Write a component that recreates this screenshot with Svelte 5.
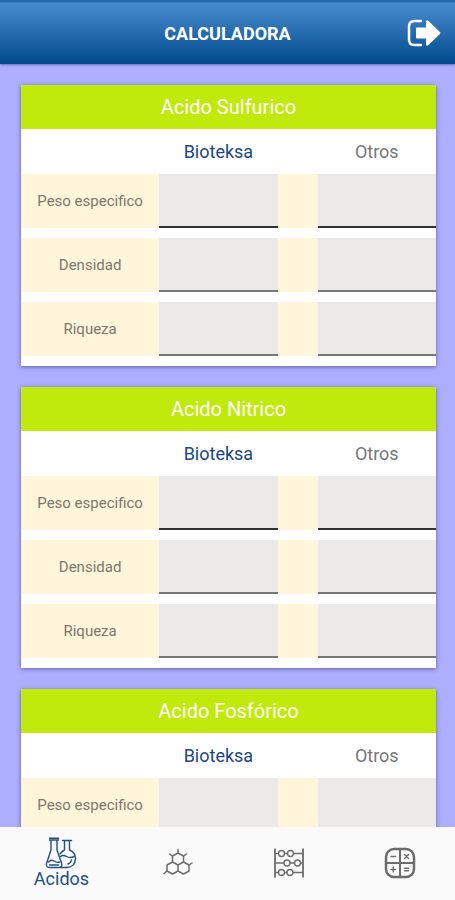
<script lang="ts">
	type Acid = {
		id: string;
		name: string;
	};

	const acids: Acid[] = [
		{ id: 'sulfurico', name: 'Acido Sulfurico' },
		{ id: 'nitrico', name: 'Acido Nitrico' },
		{ id: 'fosforico', name: 'Acido Fosfórico' }
	];

	const fields = [
		{ id: 'peso', label: 'Peso especifico' },
		{ id: 'densidad', label: 'Densidad' },
		{ id: 'riqueza', label: 'Riqueza' }
	];

	const brands = ['Bioteksa', 'Otros'];

	let activeTab = $state('acidos');
	let values: Record<string, string> = $state({});
</script>

<div class="app">
	<header class="top-bar">
		<h1>CALCULADORA</h1>
		<button type="button" class="exit-button" aria-label="Salir">
			<svg viewBox="0 0 36 30" width="36" height="30">
				<path
					d="M15 3H8.5Q3 3 3 8.5V21.5Q3 27 8.5 27H15"
					fill="none"
					stroke="#fff"
					stroke-width="2.5"
					stroke-linecap="round"
				/>
				<path
					d="M11 9.5H20V4Q20 1 22.500 3L34 14Q35 15 34 16L22.500 27Q20 29 20 26V20.500H11Q10 20.500 10 19.500V10.500Q10 9.500 11 9.500Z"
					fill="#fff"
				/>
			</svg>
		</button>
	</header>

	<main class="cards">
		{#each acids as acid (acid.id)}
			<section class="card">
				<h2>{acid.name}</h2>
				<table>
					<colgroup>
						<col class="col-label" />
						<col />
						<col class="col-gap" />
						<col />
					</colgroup>
					<thead>
						<tr>
							<td></td>
							<th scope="col" class="brand">{brands[0]}</th>
							<td></td>
							<th scope="col">{brands[1]}</th>
						</tr>
					</thead>
					<tbody>
						{#each fields as field (field.id)}
							<tr>
								<th scope="row">{field.label}</th>
								{#each brands as brand, i (brand)}
									{#if i > 0}
										<td class="gap"></td>
									{/if}
									<td>
										<input
											type="text"
											inputmode="decimal"
											aria-label="{acid.name}, {field.label}, {brand}"
											bind:value={values[`${acid.id}-${field.id}-${brand}`]}
										/>
									</td>
								{/each}
							</tr>
						{/each}
					</tbody>
				</table>
			</section>
		{/each}
	</main>

	<nav class="tabs">
		<button
			type="button"
			class="tab"
			class:active={activeTab === 'acidos'}
			onclick={() => (activeTab = 'acidos')}
		>
			<svg viewBox="0 0 32 32" width="32" height="32">
				<g fill="none" stroke="currentColor" stroke-width="1.4" stroke-linejoin="round" stroke-linecap="round">
					<path d="M4.500 1.200H13.500M4.500 3H13.500M6 3V13L1.500 26.500Q1 30.500 4 30.500H15.500M12 3V13L16.500 26Q17.500 30.500 14.500 30.500" />
					<path d="M3.500 25Q6.500 22 9 24T14.500 25M4.500 28H13.500" />
					<path d="M17.500 3.500H26.500M19.500 3.500V13M24.500 3.500V13Q30.500 15.500 30.500 21.500Q30 30 22 30.500H15.500M19.500 13Q16.500 14.500 15 17" />
					<path d="M15.500 19.500Q18 17.500 21.500 19.500T29 19.500M26.500 23Q26 26 23 27" />
				</g>
			</svg>
			<span>Acidos</span>
		</button>
		<button
			type="button"
			class="tab"
			class:active={activeTab === 'moleculas'}
			aria-label="Moléculas"
			onclick={() => (activeTab = 'moleculas')}
		>
			<svg viewBox="0 0 32 32" width="32" height="32">
				<g fill="none" stroke="currentColor" stroke-width="1.5" stroke-linejoin="round" stroke-linecap="round">
					<path d="M16 6L21.500 9V15L16 18L10.500 15V9ZM10.500 15L5 18V24L10.500 27L16 24V18M16 24L21.500 27L27 24V18L21.500 15" />
					<path d="M16 6V2.500M10.500 9L7.500 7M21.500 9L24.500 7M5 24L2 26.500M27 18L30 16" />
				</g>
			</svg>
		</button>
		<button
			type="button"
			class="tab"
			class:active={activeTab === 'abaco'}
			aria-label="Ábaco"
			onclick={() => (activeTab = 'abaco')}
		>
			<svg viewBox="0 0 32 32" width="32" height="32">
				<g fill="#fafafa" stroke="currentColor" stroke-width="1.4">
					<path d="M2 1.500V30.500M30 1.500V30.500" stroke-width="1.8" />
					<path d="M2 6.500H30M2 16H30M2 25.500H30" />
					<circle cx="8.500" cy="6.500" r="3" />
					<circle cx="17.500" cy="6.500" r="3" />
					<circle cx="14" cy="16" r="3" />
					<circle cx="24.500" cy="16" r="3" />
					<circle cx="8.500" cy="25.500" r="3" />
					<circle cx="17" cy="25.500" r="3" />
				</g>
			</svg>
		</button>
		<button
			type="button"
			class="tab"
			class:active={activeTab === 'calculadora'}
			aria-label="Calculadora"
			onclick={() => (activeTab = 'calculadora')}
		>
			<svg viewBox="0 0 32 32" width="32" height="32">
				<g fill="none" stroke="currentColor" stroke-width="1.4" stroke-linecap="round">
					<rect x="2" y="2" width="28" height="28" rx="8" stroke-width="2.5" />
					<path d="M16 2V30M2 16H30" stroke-width="2" />
					<path d="M7 9.500H11.500M20.500 7.500L24.500 11.500M24.500 7.500L20.500 11.500M7 22.500H11.500M9.250 20V25M20.500 21.300H24.500M20.500 23.700H24.500" />
				</g>
			</svg>
		</button>
	</nav>
</div>

<style>
	:global(body) {
		margin: 0;
	}

	.app {
		height: 100vh;
		display: flex;
		flex-direction: column;
		background: #aeaeff;
		font-family: Roboto, 'Liberation Sans', sans-serif;
		color: #777777;
	}

	.top-bar {
		height: 64px;
		flex-shrink: 0;
		display: grid;
		grid-template-columns: 1fr auto 1fr;
		align-items: center;
		padding: 2px 13px 0;
		box-sizing: border-box;
		background: linear-gradient(#2a6cae 0, #2a6cae 2px, #468ccf 3px, #2a70b3 45%, #004b8d 100%);
		box-shadow: 0 1px 2px rgba(40, 40, 110, 0.5);
		z-index: 1;
	}

	.top-bar h1 {
		grid-column: 2;
		margin: 0;
		font-size: 18px;
		font-weight: 700;
		color: #ffffff;
	}

	.exit-button {
		justify-self: end;
		display: flex;
		padding: 0;
		border: none;
		background: transparent;
		cursor: pointer;
	}

	.cards {
		flex: 1;
		min-height: 0;
		overflow-y: auto;
		scrollbar-width: none;
		display: flex;
		flex-direction: column;
		gap: 21px;
		padding: 21px 19px 21px 21px;
	}

	.card {
		flex-shrink: 0;
		border-radius: 2px;
		background: #ffffff;
		box-shadow: 0 1px 4px rgba(40, 40, 100, 0.6);
	}

	.card h2 {
		margin: 0;
		border-radius: 2px 2px 0 0;
		background: #c0ea0c;
		color: #ffffff;
		font-size: 20px;
		font-weight: 400;
		line-height: 44px;
		text-align: center;
	}

	table {
		width: 100%;
		table-layout: fixed;
		border-spacing: 0;
	}

	.col-label {
		width: 33.3%;
	}

	.col-gap {
		width: 40px;
	}

	th,
	td {
		padding: 0;
		font-weight: 400;
	}

	thead th {
		height: 45px;
		font-size: 18px;
	}

	thead .brand {
		color: #1d4683;
	}

	tbody th,
	tbody td {
		height: 54px;
		border-bottom: 10px solid #ffffff;
	}

	tbody th {
		background: #fff5da;
		color: #7b776c;
		font-size: 15px;
	}

	.gap {
		background: #fff5da;
	}

	input {
		display: block;
		width: 100%;
		height: 54px;
		box-sizing: border-box;
		padding: 0 8px;
		border: none;
		border-bottom: 2px solid #777777;
		border-radius: 0;
		background: #ebeae9;
		color: #444444;
		font: inherit;
		text-align: center;
	}

	tr:first-child input {
		border-bottom-color: #333333;
	}

	.tabs {
		height: 73px;
		flex-shrink: 0;
		display: flex;
		background: #fafafa;
		z-index: 1;
	}

	.tab {
		flex: 9;
		display: flex;
		flex-direction: column;
		align-items: center;
		justify-content: center;
		padding: 0 0 2px;
		border: none;
		background: transparent;
		color: #6c6c6c;
		font-family: inherit;
		font-size: 18px;
		line-height: 20px;
		cursor: pointer;
	}

	.tab.active {
		flex: 10;
		color: #24507f;
	}
</style>
